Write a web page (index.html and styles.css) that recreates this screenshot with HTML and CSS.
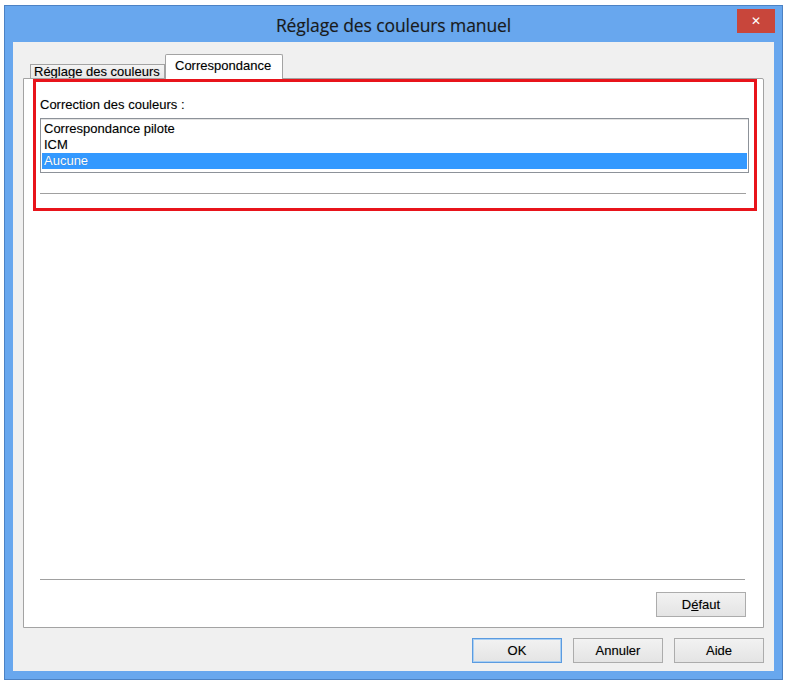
FILE: index.html
```html
<!DOCTYPE html>
<html lang="fr">
<head>
    <meta charset="UTF-8">
    <meta name="viewport" content="width=device-width, initial-scale=1.0">
    <title>Réglage des couleurs manuel</title>
    <link rel="stylesheet" href="styles.css">
</head>
<body>
    <div class="window">
        <div class="titlebar">
            <span></span>
            <span class="title">Réglage des couleurs manuel</span>
            <span class="close">&#x2715;</span>
        </div>
        <div class="client">
            <div class="tabs">
                <div class="tab">Réglage des couleurs</div>
                <div class="tab active">Correspondance</div>
            </div>
            <div class="panel">
                <!-- zone encadrée en rouge -->
                <div class="mark">
                    <div class="label">Correction des couleurs :</div>
                    <ul class="listbox">
                        <li>Correspondance pilote</li>
                        <li>ICM</li>
                        <li class="sel">Aucune</li>
                    </ul>
                    <div class="sep"></div>
                </div>
                <div class="spacer"></div>
                <div class="sep bottom"></div>
                <div class="panel-actions">
                    <button class="btn">D<u>é</u>faut</button>
                </div>
            </div>
            <div class="actions">
                <button class="btn default">OK</button>
                <button class="btn">Annuler</button>
                <button class="btn">Aide</button>
            </div>
        </div>
    </div>
</body>
</html>
```

FILE: styles.css
```css
body{
    margin:0;
    background:#fff;
    font-family:"Liberation Sans", Arial, sans-serif;
    font-size:13px;
    color:#000;
    text-shadow:0 0 1px rgba(0,0,0,.25);
}
.window{
    margin:5px 0 0 4px;
    width:779px;
    height:675px;
    box-sizing:border-box;
    border:1px solid #4c82c4;
    background:#68a7ee;
    padding:0 8px 8px;
    display:flex;
    flex-direction:column;
}
/* barre de titre */
.titlebar{
    height:36px;
    display:grid;
    grid-template-columns:1fr auto 1fr;
    align-items:center;
}
.title{
    font-family:"Open Sans", "Noto Sans", sans-serif;
    font-size:17.5px;
    color:#1a1a1a;
    padding-top:2px;
    letter-spacing:-0.1px;
}
.close{
    justify-self:end;
    align-self:start;
    margin-top:3px;
    margin-right:-1px;
    width:38px;height:24px;
    background:#c8463b;
    color:#fff;
    font-family:"DejaVu Sans", sans-serif;
    font-size:12px;
    font-weight:bold;
    text-shadow:none;
    display:flex;
    align-items:center;
    justify-content:center;
}
.client{
    flex:1;
    background:#f0f0f0;
    display:flex;
    flex-direction:column;
}
/* onglets */
.tabs{
    display:flex;
    align-items:flex-end;
    padding:12px 0 0 17px;
    height:24px;
}
.tab{
    height:14px;
    line-height:14px;
    width:135px;
    box-sizing:border-box;
    padding-left:3px;
    border:1px solid #a3a3a3;
    border-bottom:none;
    background:linear-gradient(#f4f4f4,#e7e7e7);
    white-space:nowrap;
    overflow:hidden;
}
.tab.active{
    height:25px;
    width:118px;
    line-height:22px;
    padding-left:9px;
    background:#fff;
    margin-bottom:-1px;
    position:relative;
    z-index:1;
    border-radius:2px 2px 0 0;
}
.panel{
    margin:0 10px;
    height:550px;
    box-sizing:border-box;
    border:1px solid #a3a3a3;
    border-radius:0 2px 0 0;
    background:#fff;
    display:flex;
    flex-direction:column;
}
.mark{
    margin:0 6px 0 9px;
    border:3px solid #e8141b;
    padding:15px 5px 14px 4px;
}
.label{
    line-height:16px;
}
.listbox{
    list-style:none;
    margin:5px 0 0;
    padding:2px 1px 3px;
    border:1px solid #8d9299;
    box-shadow:inset 0 1px 0 #e3e3e3;
}
.listbox li{
    height:16px;
    line-height:16px;
    padding-left:2px;
}
.listbox li.sel{
    background:#3399ff;
    color:#fff;
}
.sep{
    margin-top:20px;
    margin-right:3px;
    border-top:1px solid #a0a0a0;
}
.spacer{
    flex:1;
}
.sep.bottom{
    margin:0 18px 0 16px;
}
.panel-actions{
    display:flex;
    justify-content:flex-end;
    padding:12px 17px 10px;
}
.btn{
    width:90px;
    height:25px;
    box-sizing:border-box;
    border:1px solid #acacac;
    background:linear-gradient(#f2f2f2,#e4e4e4);
    font-family:"Liberation Sans", Arial, sans-serif;
    font-size:13px;
    color:#000;
    text-shadow:0 0 1px rgba(0,0,0,.25);
    padding:0;
}
.btn.default{
    border-color:#5b9be0;
    box-shadow:inset 0 0 0 1px #a9cff3;
}
.actions{
    display:flex;
    justify-content:flex-end;
    gap:11px;
    padding:10px 10px 0 0;
}
```
